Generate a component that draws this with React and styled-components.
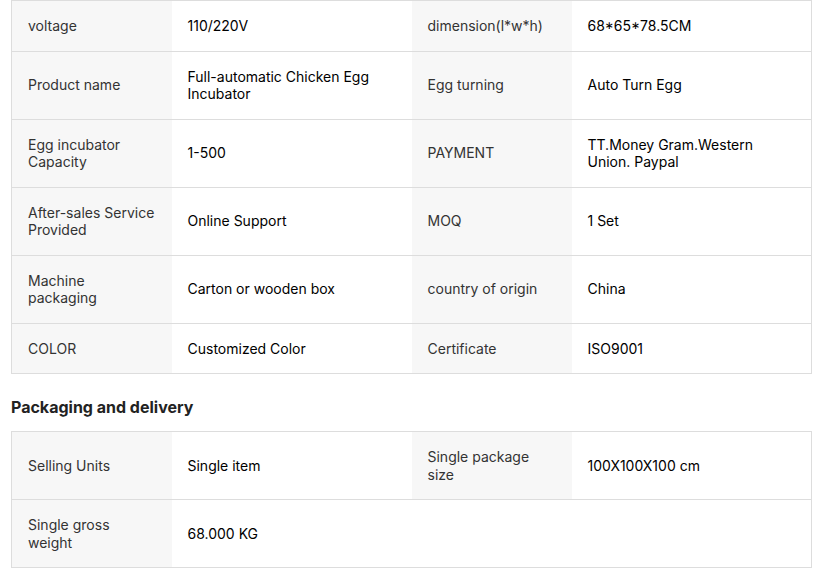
import React from "react";
import styled, { createGlobalStyle } from "styled-components";

const GlobalStyle = createGlobalStyle`
  body {
    margin: 0;
    background: #fff;
    font-family: Inter, "Noto Sans", Arial, sans-serif;
  }
`;

const Page = styled.div`
  padding: 0 15px 0 11px;
`;

const SpecTable = styled.table`
  width: 100%;
  border-collapse: collapse;
  table-layout: fixed;
  border: 1px solid #ddd;
  font-size: 14px;
  line-height: 17.5px;
`;

const Row = styled.tr`
  border-top: 1px solid #ddd;
`;

const Label = styled.td`
  padding: 16px;
  background: #f7f7f7;
  color: #333;
  vertical-align: middle;
`;

const Value = styled.td`
  padding: 16px;
  background: #fff;
  color: #000;
  font-weight: 400;
  vertical-align: middle;
`;

const Heading = styled.h3`
  margin: 21px 0 12px;
  font-size: 16px;
  line-height: 24px;
  font-weight: 700;
  color: #222;
`;

const specs = [
  ["voltage", "110/220V", "dimension(l*w*h)", "68*65*78.5CM"],
  ["Product name", "Full-automatic Chicken Egg Incubator", "Egg turning", "Auto Turn Egg"],
  ["Egg incubator Capacity", "1-500", "PAYMENT", "TT.Money Gram.Western Union. Paypal"],
  ["After-sales Service Provided", "Online Support", "MOQ", "1 Set"],
  ["Machine packaging", "Carton or wooden box", "country of origin", "China"],
  ["COLOR", "Customized Color", "Certificate", "ISO9001"],
];

const packaging = [
  ["Selling Units", "Single item", "Single package size", "100X100X100 cm"],
  ["Single gross weight", "68.000 KG"],
];

const Rows = ({ data }) =>
  data.map((row, i) => (
    <Row key={i}>
      <Label>{row[0]}</Label>
      <Value>{row[1]}</Value>
      {row[2] ? (
        <>
          <Label>{row[2]}</Label>
          <Value>{row[3]}</Value>
        </>
      ) : (
        <Value colSpan={2} />
      )}
    </Row>
  ));

const ColWidths = () => (
  <colgroup>
    <col style={{ width: "20%" }} />
    <col style={{ width: "30%" }} />
    <col style={{ width: "20%" }} />
    <col style={{ width: "30%" }} />
  </colgroup>
);

export default function App() {
  return (
    <Page>
      <GlobalStyle />
      <SpecTable>
        <ColWidths />
        <tbody>
          <Rows data={specs} />
        </tbody>
      </SpecTable>
      <Heading>Packaging and delivery</Heading>
      <SpecTable>
        <ColWidths />
        <tbody>
          <Rows data={packaging} />
        </tbody>
      </SpecTable>
    </Page>
  );
}
